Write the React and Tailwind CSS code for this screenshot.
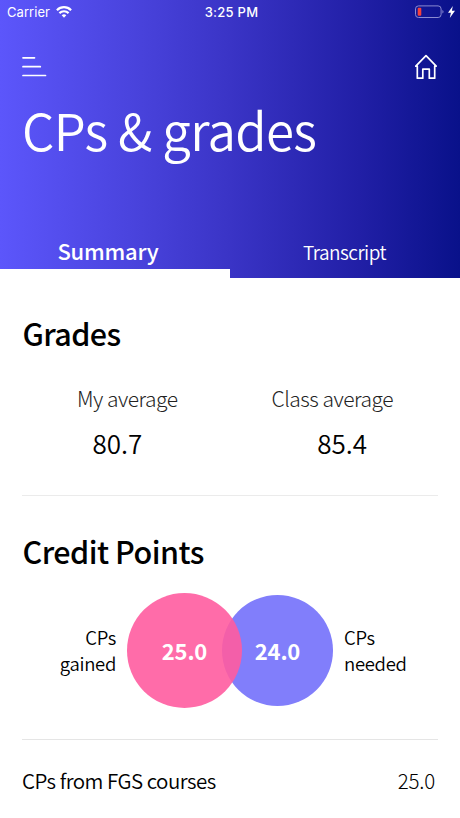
const sans = "font-['Noto_Sans_CJK_SC','Noto_Sans',sans-serif]";

function StatusBar() {
  return (
    <div className="flex h-6 items-center justify-between pl-[7px] pr-[5px] font-['Inter',sans-serif] text-[13px] leading-6">
      <div className="flex flex-1 items-center gap-[6px]">
        <span className="tracking-[0.05px]">Carrier</span>
        <svg width="16" height="12" viewBox="0 0 16 12" fill="none" stroke="white" strokeWidth="2.2">
          <path d="M.9 4.2C5 .2 11 .2 15.1 4.2" />
          <path d="M3.4 7.1C6 4.6 10 4.6 12.6 7.1" />
          <path d="M8 11.7L5.7 9.3C7 8 9 8 10.3 9.3Z" fill="white" stroke="none" />
        </svg>
      </div>
      <span className="pl-px font-medium tracking-[0.25px]">3:25 PM</span>
      <div className="flex flex-1 items-center justify-end gap-1">
        <svg width="30" height="14" viewBox="0 0 30 14" fill="none">
          <rect x="1.5" y=".9" width="25.6" height="11.6" rx="3" stroke="#8b8bd2" />
          <rect x="3.7" y="2.8" width="3.6" height="8" rx="1" fill="#f5403c" />
          <path d="M28.4 5v3.6c1.5-.6 1.5-3 0-3.6Z" fill="#8b8bd2" />
        </svg>
        <svg width="7" height="12" viewBox="0 0 7 12" fill="white">
          <path d="M4.8 0L0 6.8h2.9L1.8 12L7 4.8H3.9Z" />
        </svg>
      </div>
    </div>
  );
}

function Header() {
  return (
    <header className="flex h-[278px] flex-col bg-[linear-gradient(90deg,#5c56fb_0%,#4a44de_28%,#3a34c6_50%,#211fa6_78%,#09118a_100%)] text-white">
      <StatusBar />
      <div className="flex h-[60px] items-start justify-between pl-[22px] pr-[22px] pt-[30px]">
        <svg className="mt-[2px]" width="25" height="22" viewBox="0 0 25 22" stroke="white" strokeWidth="1.7" strokeLinecap="round">
          <path d="M1 1.8h11.5M1 10.7h17.3M1 19.5h22.5" />
        </svg>
        <svg width="24" height="26" viewBox="0 0 24 26" fill="none" stroke="white" strokeWidth="1.7" strokeLinejoin="round" strokeLinecap="round">
          <path d="M1.8 12.2L12 1.6L22.2 12.2H20.7V24.2H15.3V15.2H8.8V24.2H3.3V12.2Z" />
        </svg>
      </div>
      <h1 className="h-[145px] whitespace-nowrap pl-[22px] pt-[9px] text-[51px] font-[350] leading-[72px] tracking-[-0.65px]">CPs &amp; grades</h1>
      <div className="grid h-[49px] grid-cols-2 text-center">
        <div className="h-[49px] border-b-[9px] border-white pr-[14px] text-[22px] font-medium leading-[43px] tracking-[-0.2px]">Summary</div>
        <div className="pr-px text-[19px] font-[350] leading-[45px] tracking-[-0.5px]">Transcript</div>
      </div>
    </header>
  );
}

function Grades() {
  return (
    <section className="mx-[22px] h-[218px] border-b border-[#ebebeb] pt-[36px]">
      <h2 className="pl-[0.5px] text-[30.5px] font-medium leading-[39px] tracking-[-0.6px]">Grades</h2>
      <div className="flex h-[60px] items-end justify-between pl-[55px] pr-[45px] text-[21px] font-light leading-[30px] tracking-[-0.5px] text-[#222]">
        <span>My average</span>
        <span>Class average</span>
      </div>
      <div className="flex h-[50px] items-end justify-between pl-[70.5px] pr-[71px] text-[26px] font-[350] leading-[40px]">
        <span>80.7</span>
        <span>85.4</span>
      </div>
    </section>
  );
}

function CreditPoints() {
  return (
    <section className="mx-[22px] h-[244px] border-b border-[#e5e5e5] pt-[36px]">
      <h2 className="pl-[0.5px] text-[30.5px] font-medium leading-[39px] tracking-[-0.5px]">Credit Points</h2>
      <div className="flex h-[159px] items-center">
        <div className="w-[94px] pb-px text-right text-[18.5px] font-[350] leading-[26px] tracking-[-0.3px]">CPs<br />gained</div>
        <div className="z-10 ml-[11px] flex size-[115px] items-center justify-center rounded-full bg-[#ff5ca0]/90 pb-[2px] text-[22px] font-bold leading-8 tracking-[-0.2px] text-white">25.0</div>
        <div className="-ml-[20px] flex size-[111px] items-center justify-center rounded-full bg-[#817efb] pb-[2px] text-[22px] font-bold leading-8 tracking-[-0.2px] text-white">24.0</div>
        <div className="pb-px pl-[11px] text-[18.5px] font-[350] leading-[26px] tracking-[-0.3px]">CPs<br />needed</div>
      </div>
    </section>
  );
}

export default function App() {
  return (
    <main className={`h-[818px] w-[460px] overflow-hidden bg-white text-black ${sans}`}>
      <Header />
      <Grades />
      <CreditPoints />
      <div className="flex items-center justify-between pl-[22px] pr-[25px] pt-[23px] text-[20.5px] leading-[34px]">
        <span className="font-[350] tracking-[-0.5px]">CPs from FGS courses</span>
        <span className="font-light tracking-[-0.2px]">25.0</span>
      </div>
    </main>
  );
}
